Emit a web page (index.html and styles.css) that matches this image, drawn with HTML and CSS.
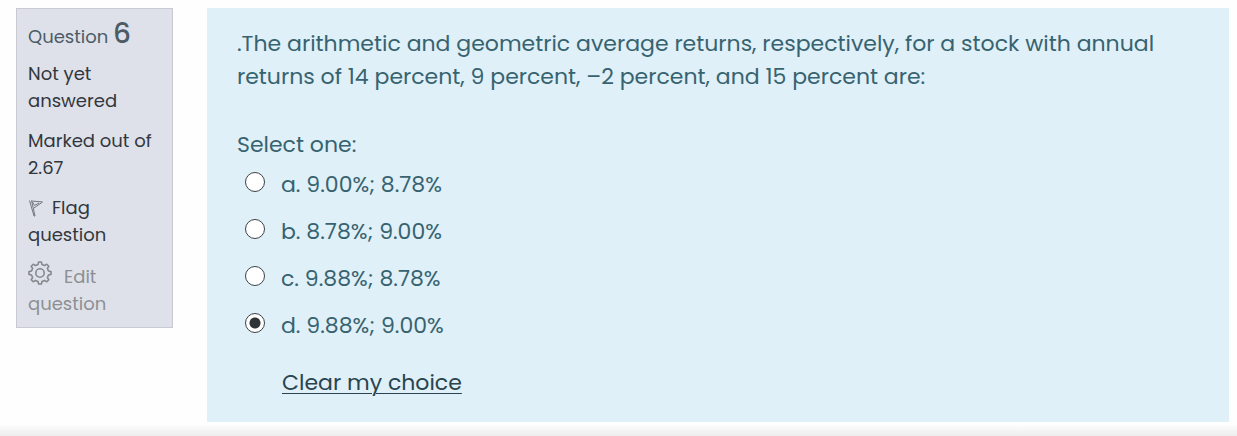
FILE: index.html
```html
<!DOCTYPE html>
<html lang="en">
<head>
    <meta charset="UTF-8">
    <meta name="viewport" content="width=device-width, initial-scale=1.0">
    <title>Question 6</title>
    <link rel="stylesheet" href="styles.css">
</head>
<body>
    <main class="question">
        <aside class="info">
            <h3 class="number">Question <span class="qno">6</span></h3>
            <div class="state">Not yet answered</div>
            <div class="grade">Marked out of 2.67</div>
            <a class="flag" href="#flag"><svg class="flag-icon" viewBox="0 0 16 18" aria-hidden="true"><path d="M1.5 1.5 L6 17 H7 L3.5 1.5 M3.5 2 L14.5 3 L6 9 M4.5 3 L6.5 6.5 L11 4"/></svg>Flag question</a>
            <a class="edit" href="#edit"><svg class="gear-icon" viewBox="0 0 24 24" aria-hidden="true"><path d="M10 3.5 L10.6 1 H13.4 L14 3.5 L16.6 4.6 L18.8 3.2 L20.8 5.2 L19.4 7.4 L20.5 10 L23 10.6 V13.4 L20.5 14 L19.4 16.6 L20.8 18.8 L18.8 20.8 L16.6 19.4 L14 20.5 L13.4 23 H10.6 L10 20.5 L7.4 19.4 L5.2 20.8 L3.2 18.8 L4.6 16.6 L3.5 14 L1 13.4 V10.6 L3.5 10 L4.6 7.4 L3.2 5.2 L5.2 3.2 L7.4 4.6 Z"/><circle cx="12" cy="12" r="4.2"/></svg>Edit question</a>
        </aside>
        <form class="content">
            <p class="qtext">.The arithmetic and geometric average returns, respectively, for a stock with annual returns of 14 percent, 9 percent, –2 percent, and 15 percent are:</p>
            <fieldset class="answers">
                <legend class="prompt">Select one:</legend>
                <div class="answer">
                    <input type="radio" name="answer" id="answer-a">
                    <label for="answer-a">a. 9.00%; 8.78%</label>
                </div>
                <div class="answer">
                    <input type="radio" name="answer" id="answer-b">
                    <label for="answer-b">b. 8.78%; 9.00%</label>
                </div>
                <div class="answer">
                    <input type="radio" name="answer" id="answer-c">
                    <label for="answer-c">c. 9.88%; 8.78%</label>
                </div>
                <div class="answer">
                    <input type="radio" name="answer" id="answer-d" checked>
                    <label for="answer-d">d. 9.88%; 9.00%</label>
                </div>
            </fieldset>
            <a class="clear" href="#clear">Clear my choice</a>
        </form>
    </main>
    <div class="page-end"></div>
</body>
</html>
```

FILE: styles.css
```css
* {
    box-sizing: border-box;
}

body {
    margin: 0;
    background: #fefefe;
    font-family: Poppins, Inter, "Open Sans", sans-serif;
}

.question {
    display: flex;
    align-items: flex-start;
    gap: 34px;
    padding: 8px 8px 0 16px;
}

.info {
    flex: 0 0 157px;
    padding: 11px 11px 10px;
    background: #dee1e9;
    border: 1px solid #c9c9d2;
    color: #32373d;
    font-size: 18px;
    line-height: 27px;
}

.number {
    margin: 0 0 10px;
    color: #4c5b66;
    font-size: 18px;
    font-weight: 400;
    line-height: 27px;
}

.qno {
    font-size: 28px;
    font-weight: 500;
    line-height: 27px;
}

.state,
.grade,
.flag {
    margin-bottom: 13px;
}

.flag,
.edit {
    display: block;
    color: inherit;
    text-decoration: none;
}

.edit {
    color: #8d8f93;
}

.flag-icon,
.gear-icon {
    fill: none;
    stroke: #73767c;
    stroke-width: 1;
}

.flag-icon {
    width: 16px;
    height: 18px;
    margin-right: 8px;
    vertical-align: -3px;
}

.gear-icon {
    width: 24px;
    height: 24px;
    margin-right: 12px;
    stroke: #85888d;
    stroke-width: 1.6;
    stroke-linejoin: round;
    vertical-align: -2px;
}

.content {
    flex: 1;
    padding: 19px 30px 23px;
    background: #dff0f8;
    color: #376370;
    font-size: 22px;
    line-height: 33px;
}

.qtext {
    margin: 0 0 35px;
}

.answers {
    margin: 0 0 10px;
    padding: 0;
    border: 0;
}

.prompt {
    margin-bottom: 7px;
    padding: 0;
}

.answer {
    display: flex;
    align-items: center;
    gap: 16px;
    margin-bottom: 14px;
    padding-left: 8px;
}

.answer input {
    appearance: none;
    width: 20px;
    height: 20px;
    margin: 0 0 5px;
    border: 1px solid #3c4246;
    border-radius: 50%;
    background: #fff;
}

.answer input:checked {
    background: radial-gradient(circle, #303335 5px, #fff 6px);
}

.clear {
    display: block;
    width: fit-content;
    margin-left: 45px;
    color: #29444f;
    text-underline-offset: 3px;
    text-decoration-thickness: 1px;
}

.page-end {
    height: 12px;
    margin-top: 2px;
    background: linear-gradient(#fefefe, #ededed);
}
```
